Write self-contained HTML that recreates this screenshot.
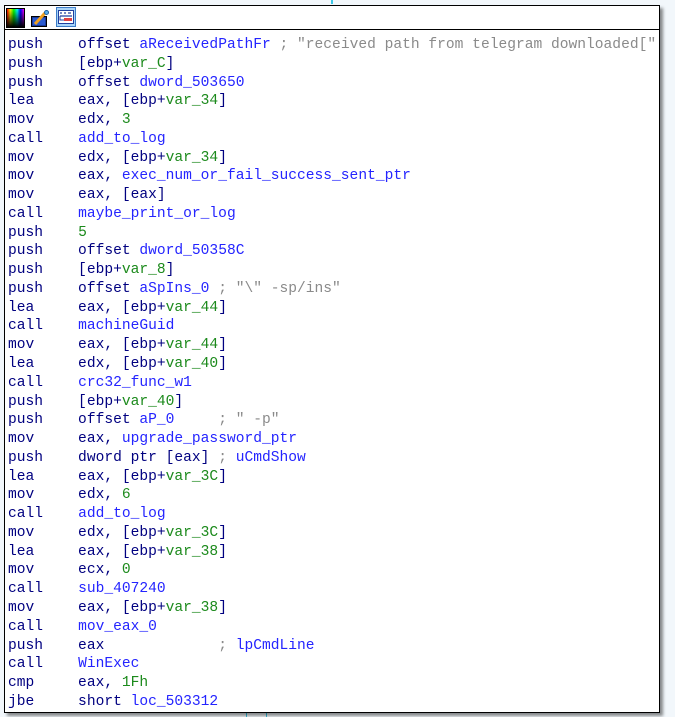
<!DOCTYPE html>
<html><head><meta charset="utf-8"><style>
html,body{margin:0;padding:0;width:675px;height:717px;overflow:hidden;background:#f2f7fb;}
.box{position:absolute;left:4px;top:5px;width:654px;height:706px;border:1px solid #000;background:#fff;box-shadow:3px 3px 3px rgba(0,0,0,0.45);}
.hdr{position:absolute;left:0;top:0;width:654px;height:23px;border-bottom:1px solid #000;}
.code{position:absolute;left:3px;top:30px;font-family:"Liberation Mono",monospace;font-size:14.6px;line-height:18.77px;white-space:pre;color:#000080;}
.n{color:#2424ff}.g{color:#1c8a1c}.c{color:#8a8a8a}
.i1{position:absolute;left:1px;top:2px;width:17px;height:18px;border:1px solid #000;background:linear-gradient(to bottom,rgba(0,0,0,0),#000),linear-gradient(to right,#f00,#ff0,#0f0,#0ff,#00f,#f0f);}
.i2{position:absolute;left:26px;top:4px;width:19px;height:17px;}
.i3{position:absolute;left:51px;top:1px;width:20px;height:20px;}
</style></head><body>
<div style="position:absolute;left:331px;top:0;width:2px;height:4px;background:#3cc8e8"></div>
<div style="position:absolute;left:246px;top:712px;width:1px;height:5px;background:#3cc8e8"></div>
<div style="position:absolute;left:266px;top:712px;width:1px;height:5px;background:#3cc8e8"></div>
<div class="box">
<div class="hdr">
<div class="i1"></div>
<svg class="i2" viewBox="0 0 19 17"><rect x="0.5" y="6.5" width="15" height="10" fill="#1a3a9a" stroke="#000"/><rect x="2" y="8" width="12" height="7" fill="#2a5ad0"/><path d="M4 14 L14 3" stroke="#f0a020" stroke-width="3"/><circle cx="15.5" cy="2.5" r="2" fill="#5ab0f0" stroke="#2060a0"/></svg>
<svg class="i3" viewBox="0 0 20 20"><rect x="0.5" y="0.5" width="19" height="19" fill="#a8d4f8" stroke="#3c7cc8"/><rect x="2.5" y="3.5" width="15" height="13" fill="#fff" stroke="#2040a0"/><path d="M4 6h2M8 6h2M12 6h3M4 9h12" stroke="#2040a0" stroke-width="1.3"/><rect x="8" y="11" width="8" height="3" fill="#e04040"/><path d="M4 9v4h4" stroke="#2040a0" fill="none"/></svg>
</div>
<div class="code">push    offset <span class="n">aReceivedPathFr</span> <span class="c">; "received path from telegram downloaded["</span>
push    [ebp+<span class="g">var_C</span>]
push    offset <span class="n">dword_503650</span>
lea     eax, [ebp+<span class="g">var_34</span>]
mov     edx, <span class="g">3</span>
call    <span class="n">add_to_log</span>
mov     edx, [ebp+<span class="g">var_34</span>]
mov     eax, <span class="n">exec_num_or_fail_success_sent_ptr</span>
mov     eax, [eax]
call    <span class="n">maybe_print_or_log</span>
push    <span class="g">5</span>
push    offset <span class="n">dword_50358C</span>
push    [ebp+<span class="g">var_8</span>]
push    offset <span class="n">aSpIns_0</span> <span class="c">; "\" -sp/ins"</span>
lea     eax, [ebp+<span class="g">var_44</span>]
call    <span class="n">machineGuid</span>
mov     eax, [ebp+<span class="g">var_44</span>]
lea     edx, [ebp+<span class="g">var_40</span>]
call    <span class="n">crc32_func_w1</span>
push    [ebp+<span class="g">var_40</span>]
push    offset <span class="n">aP_0</span>     <span class="c">; " -p"</span>
mov     eax, <span class="n">upgrade_password_ptr</span>
push    dword ptr [eax] <span class="c">; </span><span class="n">uCmdShow</span>
lea     eax, [ebp+<span class="g">var_3C</span>]
mov     edx, <span class="g">6</span>
call    <span class="n">add_to_log</span>
mov     edx, [ebp+<span class="g">var_3C</span>]
lea     eax, [ebp+<span class="g">var_38</span>]
mov     ecx, <span class="g">0</span>
call    <span class="n">sub_407240</span>
mov     eax, [ebp+<span class="g">var_38</span>]
call    <span class="n">mov_eax_0</span>
push    eax             <span class="c">; </span><span class="n">lpCmdLine</span>
call    <span class="n">WinExec</span>
cmp     eax, <span class="g">1Fh</span>
jbe     short <span class="n">loc_503312</span></div>
</div>
</body></html>
